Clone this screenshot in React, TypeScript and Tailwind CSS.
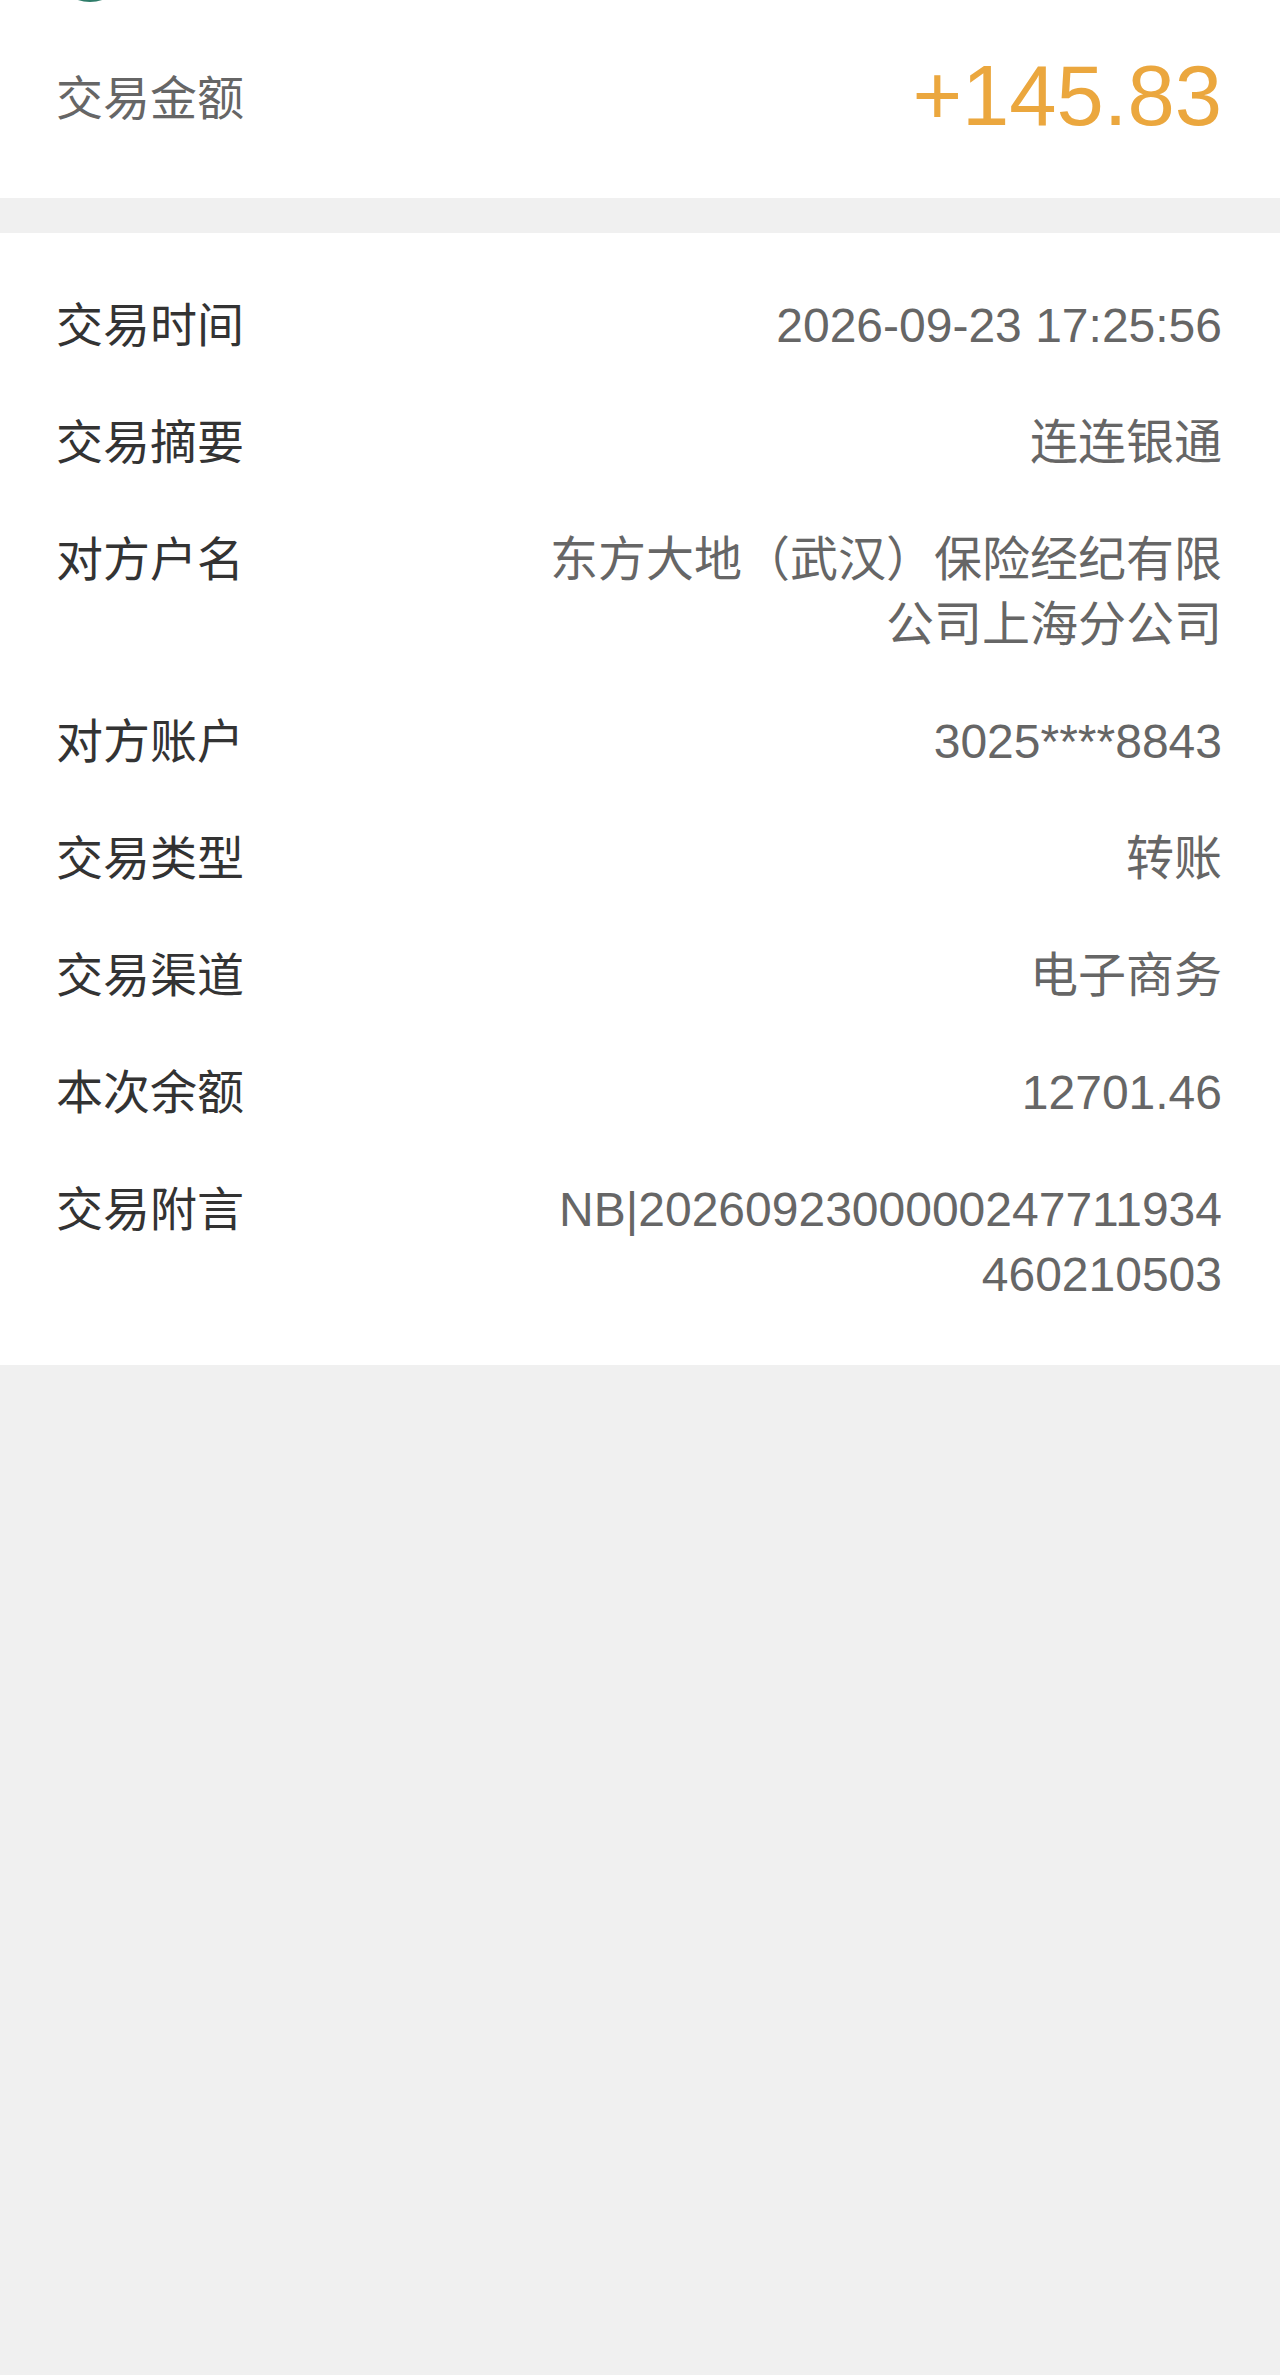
import React from 'react';

const rows: { label: string; value: string }[] = [
  { label: '交易时间', value: '2026-09-23 17:25:56' },
  { label: '交易摘要', value: '连连银通' },
  { label: '对方户名', value: '东方大地（武汉）保险经纪有限公司上海分公司' },
  { label: '对方账户', value: '3025****8843' },
  { label: '交易类型', value: '转账' },
  { label: '交易渠道', value: '电子商务' },
  { label: '本次余额', value: '12701.46' },
  { label: '交易附言', value: 'NB|2026092300000247711934460210503' },
];

export default function App() {
  return (
    <div
      className="min-h-[2375px] w-full bg-[#f0f0f0] overflow-hidden"
      style={{ fontFamily: '"Liberation Sans", "Noto Sans CJK SC", sans-serif' }}
    >
      {/* Amount header */}
      <div className="relative bg-white h-[198px] flex items-center justify-between pl-[56px] pr-[58px]">
        <div className="absolute left-[52px] top-[-74px] w-[76px] h-[76px] rounded-full bg-[#2f7d6a]" />
        <span className="text-[47px] leading-none text-[#666666] mt-[-2px]">交易金额</span>
        <span className="text-[85px] leading-none text-[#eba73e] mt-[-8px]">+145.83</span>
      </div>

      <div className="h-[35px]" />

      {/* Detail rows */}
      <div className="bg-white pt-[34px] pb-[32px] pl-[56px] pr-[58px]">
        {rows.map((r) => (
          <div key={r.label} className="flex justify-between items-start py-[26px]">
            <span className="text-[47px] leading-[65px] text-[#333333] shrink-0">{r.label}</span>
            <span className="text-[48px] leading-[65px] text-[#666666] text-right w-[680px] break-all">
              {r.value}
            </span>
          </div>
        ))}
      </div>
    </div>
  );
}
